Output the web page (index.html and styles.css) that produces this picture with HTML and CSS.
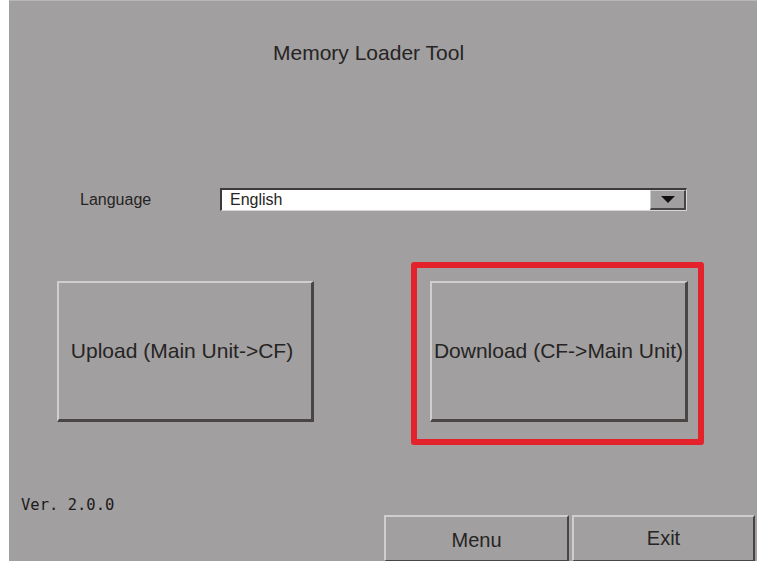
FILE: index.html
```html
<!DOCTYPE html>
<html lang="en">
<head>
    <meta charset="UTF-8">
    <title>Memory Loader Tool</title>
    <link rel="stylesheet" href="styles.css">
</head>
<body>
    <div class="panel">
        <div class="title">Memory Loader Tool</div>

        <div class="lang-row">
            <div class="lang-label">Language</div>
            <div class="select">
                <div class="select-value">English</div>
                <div class="select-btn"><span class="arrow"></span></div>
            </div>
        </div>

        <div class="actions">
            <button class="big-btn upload-btn">Upload (Main Unit-&gt;CF)</button>
            <div class="highlight">
                <button class="big-btn">Download (CF-&gt;Main Unit)</button>
            </div>
        </div>

        <div class="footer">
            <div class="version">Ver. 2.0.0</div>
            <div class="bottom-btns">
                <button class="bar-btn menu-btn">Menu</button>
                <button class="bar-btn exit-btn">Exit</button>
            </div>
        </div>
    </div>
</body>
</html>
```

FILE: styles.css
```css
:root {
    --panel: #a19f9f;
    --text: #262424;
    --light-edge: #cfcdcd;
    --dark-edge: #4a4545;
    --red: #e3222b;
}

* {
    margin: 0;
    padding: 0;
    box-sizing: border-box;
}

body {
    background: #ffffff;
    font-family: "Liberation Sans", Arial, sans-serif;
    color: var(--text);
}

.panel {
    margin-left: 9px;
    width: 748px;
    height: 561px;
    background: var(--panel);
    border-top: 1px solid #b8b6b6;
    display: flex;
    flex-direction: column;
}

.title {
    margin-top: 41px;
    padding-left: 264px;
    font-size: 21px;
    line-height: 22px;
}

.lang-row {
    display: flex;
    align-items: center;
    margin-top: 124px;
    padding-left: 71px;
    font-size: 16px;
}

.lang-label {
    width: 140px;
}

.select {
    display: flex;
    width: 467px;
    height: 23px;
    background: #ffffff;
    border-top: 2px solid #3e3a3a;
    border-left: 2px solid #3e3a3a;
    border-bottom: 1px solid #d8d6d6;
    border-right: 1px solid #d8d6d6;
}

.select-value {
    flex: 1;
    padding-left: 8px;
    line-height: 20px;
}

.select-btn {
    width: 36px;
    background: var(--panel);
    border-top: 1px solid var(--light-edge);
    border-left: 1px solid var(--light-edge);
    border-right: 2px solid var(--dark-edge);
    border-bottom: 2px solid var(--dark-edge);
    display: flex;
    align-items: center;
    justify-content: center;
}

.arrow {
    width: 0;
    height: 0;
    border-left: 7px solid transparent;
    border-right: 7px solid transparent;
    border-top: 7px solid #111;
}

.actions {
    display: flex;
    align-items: flex-start;
    margin-top: 51px;
    padding-left: 48px;
}

.big-btn {
    width: 258px;
    height: 141px;
    background: var(--panel);
    font-family: inherit;
    font-size: 21px;
    color: var(--text);
    border-top: 2px solid var(--light-edge);
    border-left: 2px solid var(--light-edge);
    border-right: 3px solid var(--dark-edge);
    border-bottom: 3px solid var(--dark-edge);
    white-space: nowrap;
}

.upload-btn {
    margin-top: 19px;
    width: 257px;
    padding-right: 6px;
}

.highlight {
    margin-left: 97px;
    border: 6px solid var(--red);
    border-radius: 3px;
    padding: 13px 10px 17px 13px;
}

.footer {
    margin-top: auto;
    display: flex;
    align-items: flex-end;
}

.version {
    width: 375px;
    padding-left: 12px;
    margin-bottom: 47px;
    font-family: "DejaVu Sans Mono", monospace;
    font-size: 15.5px;
    line-height: 18px;
    color: #1c1a1a;
}

.bottom-btns {
    display: flex;
    gap: 3px;
}

.bar-btn {
    height: 46px;
    background: var(--panel);
    font-family: inherit;
    font-size: 20px;
    color: var(--text);
    border-top: 2px solid var(--light-edge);
    border-left: 2px solid var(--light-edge);
    border-right: 2px solid var(--dark-edge);
    border-bottom: 1px solid var(--dark-edge);
}

.menu-btn {
    width: 185px;
    padding-top: 4px;
}

.exit-btn {
    width: 183px;
}
```
